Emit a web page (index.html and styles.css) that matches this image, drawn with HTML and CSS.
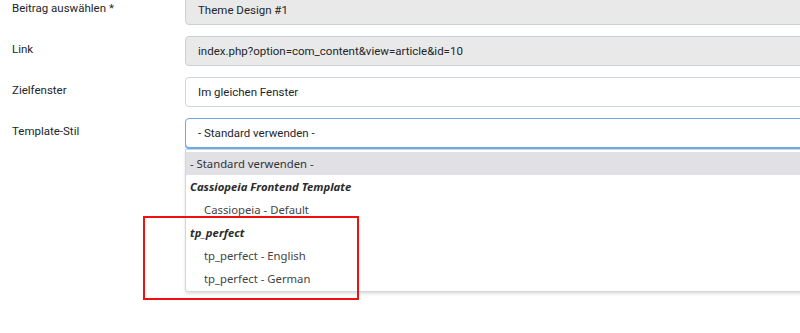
FILE: index.html
```html
<!DOCTYPE html>
<html lang="de">
<head>
  <meta charset="UTF-8">
  <meta name="viewport" content="width=device-width, initial-scale=1">
  <title>Menüeintrag</title>
  <link rel="stylesheet" href="styles.css">
</head>
<body>
  <div class="form">
    <div class="row">
      <label class="label">Beitrag auswählen *</label>
      <div class="field readonly">Theme Design #1</div>
    </div>
    <div class="row">
      <label class="label">Link</label>
      <div class="field readonly">index.php?option=com_content&amp;view=article&amp;id=10</div>
    </div>
    <div class="row">
      <label class="label">Zielfenster</label>
      <div class="field">Im gleichen Fenster</div>
    </div>
    <div class="row">
      <label class="label">Template-Stil</label>
      <div class="select-wrap">
        <div class="field focus">- Standard verwenden -</div>

        <!-- geöffnete Auswahlliste -->
        <ul class="dropdown">
          <li class="option active">- Standard verwenden -</li>
          <li class="group">Cassiopeia Frontend Template</li>
          <li class="option sub">Cassiopeia - Default</li>
          <li class="group">tp_perfect</li>
          <li class="option sub">tp_perfect - English</li>
          <li class="option sub">tp_perfect - German</li>
        </ul>
      </div>
    </div>
  </div>

  <div class="highlight"></div>
</body>
</html>
```

FILE: styles.css
```css
body {
  margin: 0;
  width: 800px;
  height: 333px;
  overflow: hidden;
  background: #fff;
  font-family: Roboto, "Liberation Sans", sans-serif;
  font-size: 11.5px;
  color: #22262a;
  position: relative;
}
.form {
  margin-top: -5px;
  padding-left: 12px;
  display: flex;
  flex-direction: column;
  gap: 11px;
}
.row {
  display: grid;
  grid-template-columns: 173px 640px;
  align-items: start;
}
.label {
  padding-top: 6px;
  line-height: 15px;
}
.field {
  box-sizing: border-box;
  height: 30px;
  padding: 0 12px;
  line-height: 28px;
  border: 1px solid #cfd6df;
  border-radius: 4px;
  background: #fff;
  white-space: nowrap;
}
.readonly {
  background: #e9e9e9;
  border-color: #c8d0da;
}
.focus {
  border-color: #6aaae8;
  box-shadow: 0 1px 0 #6aaae8;
}
.select-wrap {
  position: relative;
}
.dropdown {
  position: absolute;
  top: 31px;
  left: 0;
  width: 660px;
  margin: 0;
  padding: 2px 0 1px;
  list-style: none;
  background: #fff;
  border: 1px solid #d6d6da;
  border-radius: 0 0 0 3px;
  box-shadow: 0 2px 3px rgba(0, 0, 0, 0.12);
  font-family: "Noto Sans", "Open Sans", sans-serif;
  font-size: 11.3px;
  color: #444;
}
.dropdown li {
  height: 23px;
  line-height: 23px;
  padding-left: 4px;
  white-space: nowrap;
}
.option.active {
  background: #e0e0e5;
  color: #333;
}
.group {
  font-weight: bold;
  font-style: italic;
  color: #2b2b2b;
}
.option.sub {
  padding-left: 18px;
}
.highlight {
  position: absolute;
  left: 143px;
  top: 216px;
  width: 212px;
  height: 80px;
  border: 2px solid #f01010;
}
```
